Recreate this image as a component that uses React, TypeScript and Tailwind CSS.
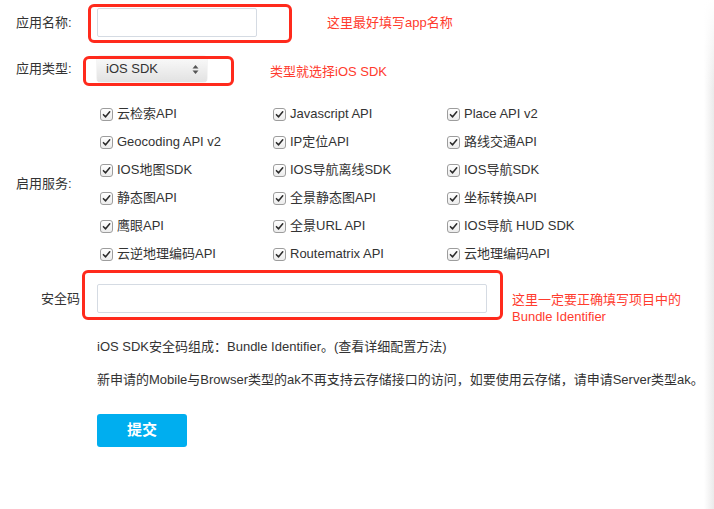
const services = [
  "云检索API", "Javascript API", "Place API v2",
  "Geocoding API v2", "IP定位API", "路线交通API",
  "IOS地图SDK", "IOS导航离线SDK", "IOS导航SDK",
  "静态图API", "全景静态图API", "坐标转换API",
  "鹰眼API", "全景URL API", "IOS导航 HUD SDK",
  "云逆地理编码API", "Routematrix API", "云地理编码API",
];

function Check({ label }: { label: string }) {
  return (
    <label className="flex h-[28px] items-center gap-[4px]">
      <span className="flex h-[13px] w-[13px] items-center justify-center rounded-[3px] border border-[#9d9d9d] bg-gradient-to-b from-white to-[#ececec]">
        <svg width="9" height="9" viewBox="0 0 10 10">
          <path d="M1.6 5.2 L4 7.6 L8.6 2" fill="none" stroke="#2b2b2b" strokeWidth="1.7" strokeLinecap="round" strokeLinejoin="round" />
        </svg>
      </span>
      <span className="whitespace-nowrap">{label}</span>
    </label>
  );
}

export default function App() {
  return (
    <div className="flex h-[509px] w-full overflow-hidden bg-white font-['Liberation_Sans','Noto_Sans_CJK_SC',sans-serif] text-[13px] text-[#333]">
      <div className="flex-1 pl-4 pt-2">
        {/* 应用名称 */}
        <div className="flex items-center">
          <span className="w-[81px]">应用名称:</span>
          <div className="relative">
            <input className="block h-[29px] w-[160px] rounded-[2px] border border-[#d5dbe3] bg-white outline-none" />
            <div className="absolute left-[-9px] top-[-4px] h-[39px] w-[204px] rounded-[6px] border-[3px] border-[#ff2a1c]" />
          </div>
          <span className="ml-[70px] text-[#ff3b2e]">这里最好填写app名称</span>
        </div>

        {/* 应用类型 */}
        <div className="mt-[19px] flex items-start">
          <span className="flex h-[26px] w-[81px] items-center">应用类型:</span>
          <div className="relative">
            <div className="flex h-[26px] w-[110px] items-center justify-between rounded-[4px] bg-gradient-to-b from-[#fbfbfb] to-[#e2e2e2] pl-[9px] pr-[8px] shadow-[0_0_1px_rgba(0,0,0,0.4)]">
              <span>iOS SDK</span>
              <svg width="7" height="11" viewBox="0 0 7 11">
                <path d="M3.5 1 L6.5 4.5 L0.5 4.5 Z" fill="#555" />
                <path d="M3.5 10 L6.5 6.5 L0.5 6.5 Z" fill="#555" />
              </svg>
            </div>
            <div className="absolute left-[-14px] top-0 h-[30px] w-[151px] rounded-[6px] border-[3px] border-[#ff2a1c]" />
          </div>
          <span className="ml-[63px] mt-[7px] leading-[18px] text-[#ff3b2e]">类型就选择iOS SDK</span>
        </div>

        {/* 启用服务 */}
        <div className="mt-[18px] flex items-center">
          <span className="w-[84px]">启用服务:</span>
          <div className="grid grid-cols-[173px_174px_174px]">
            {services.map((s) => (
              <Check key={s} label={s} />
            ))}
          </div>
        </div>

        {/* 安全码 */}
        <div className="mt-[16px] flex items-start">
          <span className="flex h-[29px] w-[81px] items-center justify-end pr-[17px]">安全码</span>
          <div className="relative">
            <input className="block h-[29px] w-[390px] rounded-[2px] border border-[#d5dbe3] bg-white outline-none" />
            <div className="absolute left-[-15px] top-[-14px] h-[50px] w-[421px] rounded-[6px] border-[3px] border-[#ff2a1c]" />
          </div>
          <div className="ml-[25px] h-[29px] pt-[7px] leading-[17px] text-[#ff3b2e]">
            <div>这里一定要正确填写项目中的</div>
            <div>Bundle Identifier</div>
          </div>
        </div>

        <div className="pl-[81px]">
          <p className="mt-[24px] leading-[20px]">iOS SDK安全码组成：Bundle Identifier。(查看详细配置方法)</p>
          <p className="mt-[13px] whitespace-nowrap leading-[20px]">新申请的Mobile与Browser类型的ak不再支持云存储接口的访问，如要使用云存储，请申请Server类型ak。</p>
          <button className="mt-[24px] h-[33px] w-[90px] rounded-[3px] bg-[#00aeef] text-[15px] font-bold text-white">提交</button>
        </div>
      </div>

      {/* window shadow on the right edge */}
      <div className="relative w-[22px] shrink-0 bg-gradient-to-r from-white to-[#d2d2d2]">
        <div className="absolute inset-x-0 top-0 h-[90px] bg-gradient-to-b from-white to-transparent" />
      </div>
    </div>
  );
}
